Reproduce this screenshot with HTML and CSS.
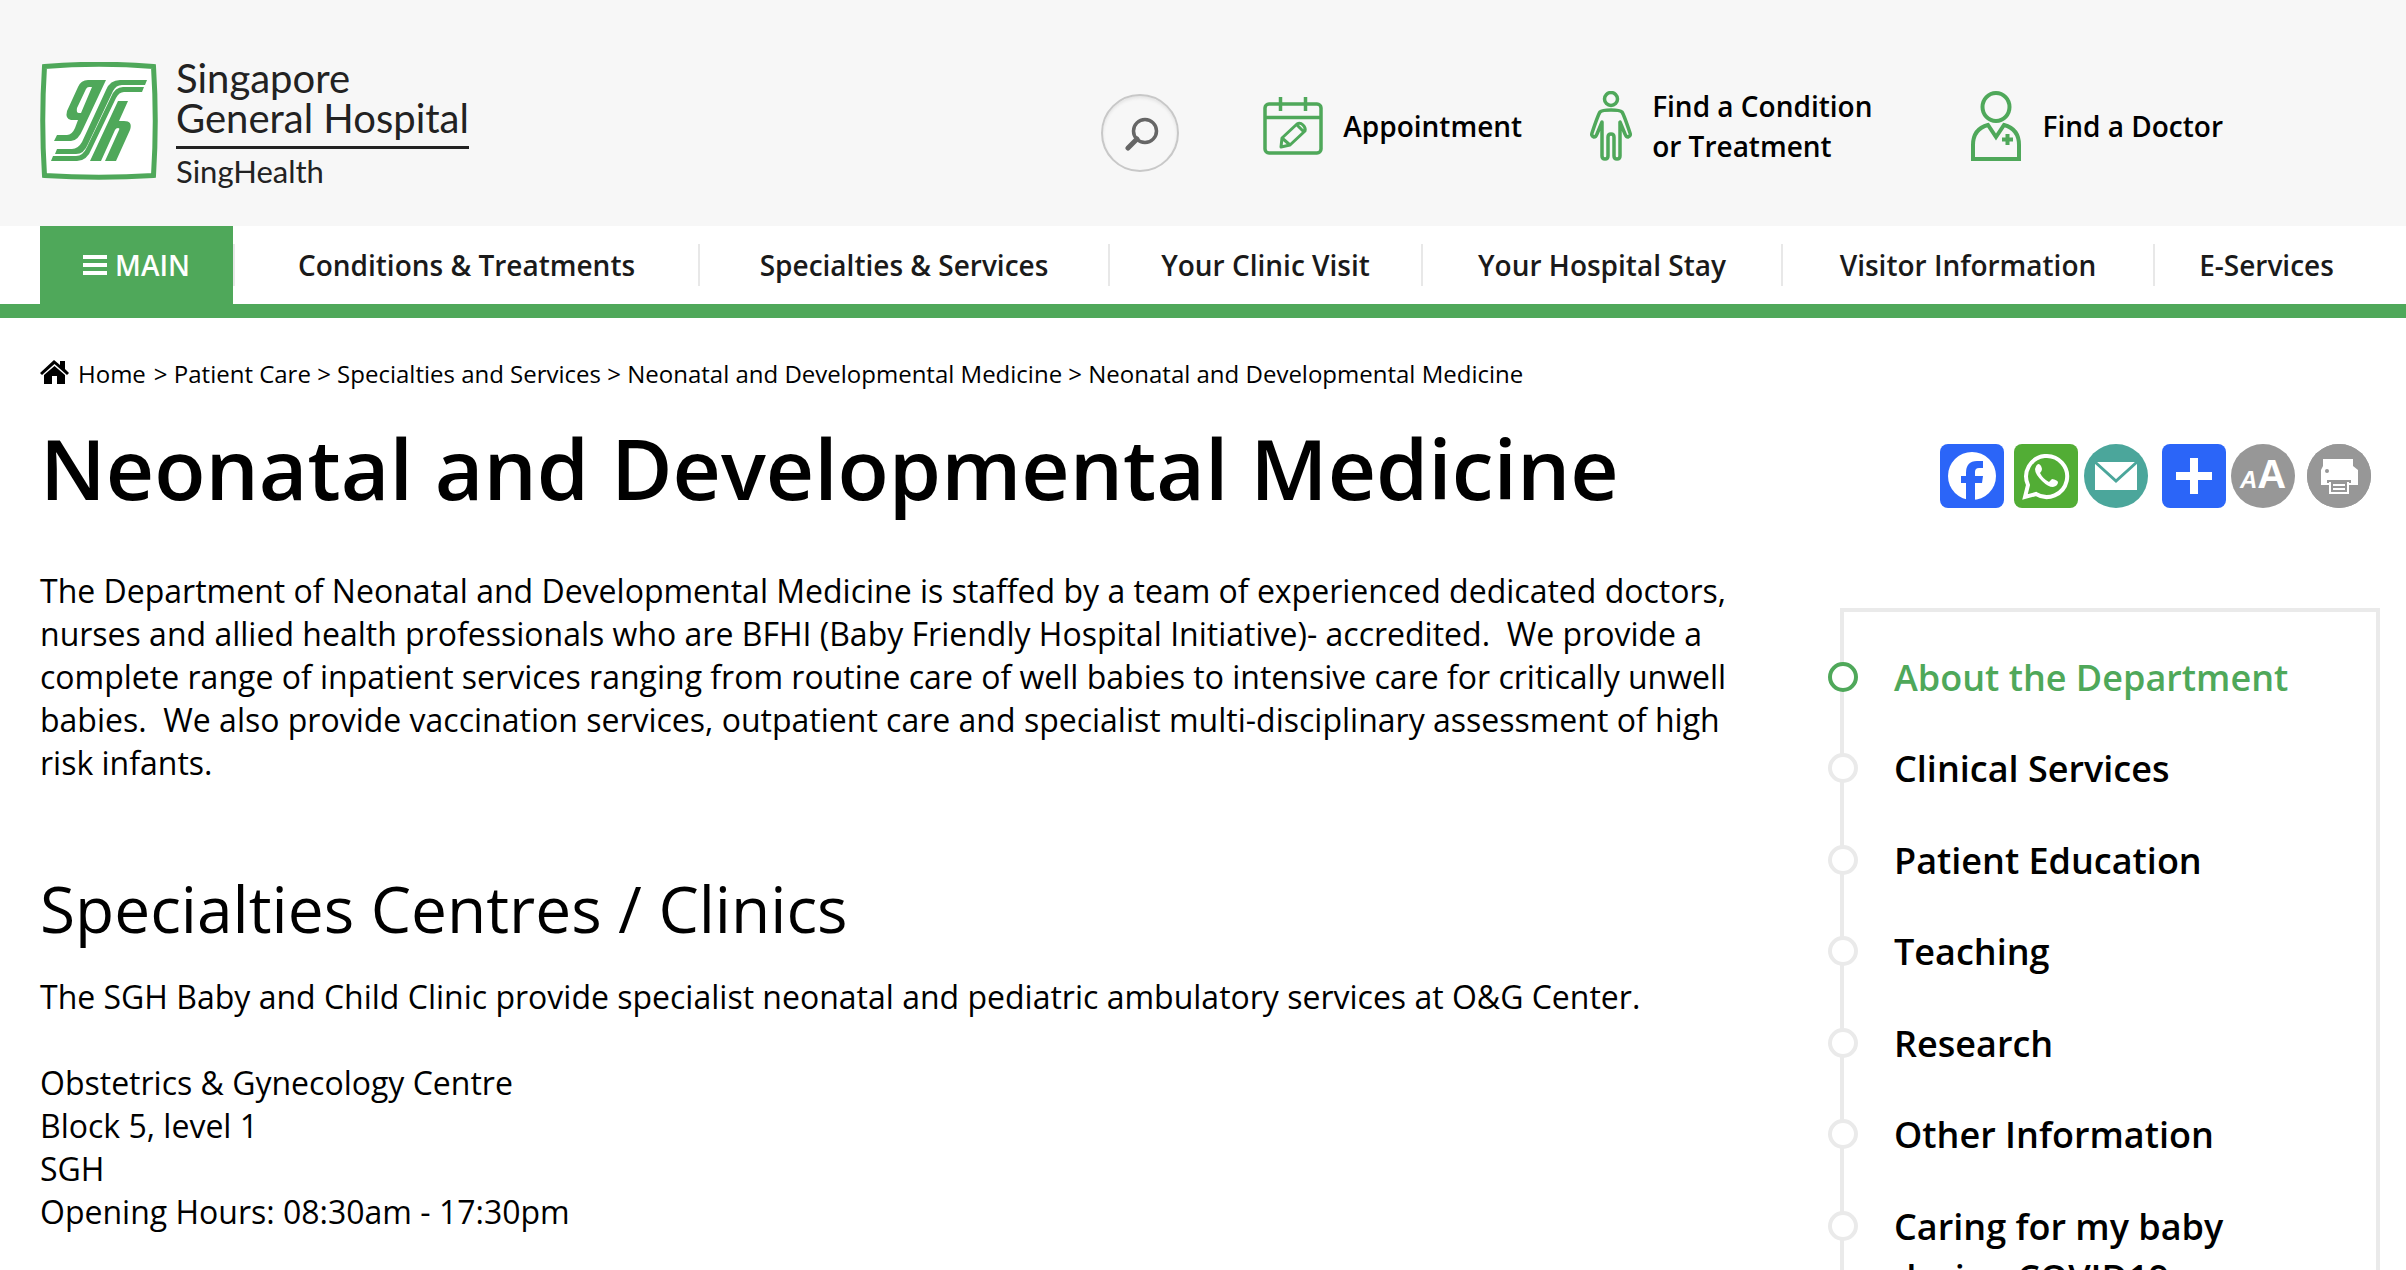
FILE: index.html
```html
<!DOCTYPE html>
<html lang="en">
<head>
<meta charset="utf-8">
<meta name="viewport" content="width=device-width, initial-scale=1">
<title>Neonatal and Developmental Medicine - Singapore General Hospital</title>
<link rel="stylesheet" href="styles.css">
</head>
<body>
<header class="site-header">
  <a class="logo" href="#">
    <svg class="logo-mark" viewBox="0 0 118 118" aria-hidden="true">
      <path d="M4 4Q59-1 114 4Q119 59 114 114Q59 119 4 114Q-1 59 4 4Z" fill="#fff" stroke="none"/>
      <path d="M4.500 4.500Q59 0 113.500 4.500Q117 59 113.500 113.500Q59 117 4.500 113.500Q1 59 4.500 4.500Z" fill="none" stroke="#4fa85a" stroke-width="5"/>
      <g fill="#4fa85a">
        <path fill-rule="evenodd" d="M66 18L43 67Q38 79 31 79H14L17 73H27Q32 73 35 66L38 58H31Q25 57 27 49L38 25Q41 18 48 18ZM52 25H49Q47 25 46 27L37 46Q36 51 39 51H41Z"/>
        <path d="M107 18L105 23H82Q76 23 73 29L48 82Q44 92 36 92H15L17 87H32Q38 87 42 80L66 28Q70 18 80 18Z"/>
        <path d="M104 25L102 30H84Q79 30 76 36L52 86Q47 99 37 99H11L13 94H36Q43 94 47 85L71 35Q75 25 83 25Z"/>
        <path d="M78 39H88L79 59H84Q93 59 90 68L76 99H65L79 68Q80 66 78 66Q76 66 75 68L61 99H50Z"/>
      </g>
    </svg>
    <span class="logo-text">
      <span class="logo-name">Singapore<br>General Hospital</span>
      <span class="logo-group">SingHealth</span>
    </span>
  </a>
  <div class="header-tools">
    <button class="search" type="button" aria-label="Search">
      <svg viewBox="0 0 34 34" fill="none" stroke="#666"><circle cx="20" cy="14" r="11.500" stroke-width="3.500"/><path d="M12 22L3 31" stroke-width="5" stroke-linecap="round"/></svg>
    </button>
    <a class="tool tool-appointment" href="#">
      <svg width="60" height="58" viewBox="0 0 60 58" fill="none" stroke="#4fa85a" stroke-width="3.500">
        <rect x="2" y="7" width="56" height="49" rx="4"/><path d="M1 20.500H59M17.500 0V14M42.500 0V14"/>
        <path d="M18 50L19 41L34 27Q37 25 40 28T42 34L27 48ZM19 41L27 48M34 28L41 35" stroke-width="3" stroke-linejoin="round"/>
      </svg>
      <span>Appointment</span>
    </a>
    <a class="tool tool-condition" href="#">
      <svg width="42" height="70" viewBox="0 0 42 70" fill="none" stroke="#4fa85a" stroke-width="3.500" stroke-linejoin="round" stroke-linecap="round">
        <ellipse cx="21" cy="8" rx="6.500" ry="6.500"/>
        <path d="M21 19Q30 19 32 21Q34 24 40 42Q41 45 38 46Q36 46 35 43L30 31V65Q30 68 27 68Q24 68 24 65V46Q24 43 21 43Q18 43 18 46V65Q18 68 15 68Q12 68 12 65V31L7 43Q6 46 4 46Q1 45 2 42Q8 24 10 21Q12 19 21 19Z"/>
      </svg>
      <span>Find a Condition<br>or Treatment</span>
    </a>
    <a class="tool tool-doctor" href="#">
      <svg width="50" height="70" viewBox="0 0 50 70" fill="none" stroke="#4fa85a" stroke-width="4">
        <ellipse cx="25" cy="16" rx="13.500" ry="14"/>
        <path d="M17 34Q2 38 2 54V68H48V54Q48 38 33 34L25 46Z"/><path d="M36.500 43V54M31 48.500H42"/>
      </svg>
      <span>Find a Doctor</span>
    </a>
  </div>
</header>

<nav class="main-nav" aria-label="Main">
  <button class="main-menu" type="button">
    <svg width="24" height="20" viewBox="0 0 24 20" fill="#fff" aria-hidden="true"><path d="M0 0H24V4H0ZM0 8H24V12H0ZM0 16H24V20H0Z"/></svg>MAIN
  </button>
  <a href="#">Conditions &amp; Treatments</a>
  <a href="#">Specialties &amp; Services</a>
  <a href="#">Your Clinic Visit</a>
  <a href="#">Your Hospital Stay</a>
  <a href="#">Visitor Information</a>
  <a href="#">E-Services</a>
</nav>

<nav class="breadcrumb" aria-label="Breadcrumb">
  <svg width="29" height="24" viewBox="0 0 29 24" aria-hidden="true"><path d="M14 0L20 5V1H25V9L29 13L27 15L14.500 4L2 15L0 13Z"/><path d="M14.500 6L25 15V24H17V16H12V24H4V15Z"/></svg>
  <a class="home" href="#">Home</a>
  <span>&gt; <a href="#">Patient Care</a> &gt; <a href="#">Specialties and Services</a> &gt; <a href="#">Neonatal and Developmental Medicine</a> &gt; Neonatal and Developmental Medicine</span>
</nav>

<main class="page">
  <article class="content">
    <h1>Neonatal and Developmental Medicine</h1>
    <p>The Department of Neonatal and Developmental Medicine is staffed by a team of experienced dedicated doctors, nurses and allied health professionals who are BFHI (Baby Friendly Hospital Initiative)- accredited.&nbsp; We provide a complete range of inpatient services ranging from routine care of well babies to intensive care for critically unwell babies.&nbsp; We also provide vaccination services, outpatient care and specialist multi-disciplinary assessment of high risk infants.</p>
    <h2>Specialties Centres / Clinics</h2>
    <p>The SGH Baby and Child Clinic provide specialist neonatal and pediatric ambulatory services at O&amp;G Center.</p>
    <p class="address">Obstetrics &amp; Gynecology Centre<br>Block 5, level 1<br>SGH<br>Opening Hours: 08:30am - 17:30pm</p>
  </article>
  <aside class="side">
    <div class="share">
      <a href="#" aria-label="Facebook"><svg viewBox="0 0 64 64"><rect width="64" height="64" rx="8" fill="#2b65f8"/><circle cx="32" cy="32" r="24" fill="#fff"/><path d="M26 58V39H21V32H26V29Q26 17 37 17H43V24H39Q35 24 35 28V32H43L42 39H35V58Z" fill="#2b65f8"/></svg></a>
      <a href="#" aria-label="WhatsApp"><svg viewBox="0 0 64 64"><rect width="64" height="64" rx="8" fill="#52ad35"/><path d="M11 53L14 41A20.500 20.500 0 1 1 22 50Z" fill="none" stroke="#fff" stroke-width="4"/><path d="M24 20Q27 20 28 25Q28 27 26 29Q29 35 35 38L38 35Q43 36 44 38Q44 42 39 43Q34 43 28 37Q21 30 21 25Q22 21 24 20Z" fill="#fff"/></svg></a>
      <a class="share-mail" href="#" aria-label="Email"><svg viewBox="0 0 64 64"><circle cx="32" cy="32" r="32" fill="#4ba69b"/><path d="M11 18H53V46H11Z" fill="#fff"/><path d="M11 18L32 37L53 18" fill="none" stroke="#4ba69b" stroke-width="3"/></svg></a>
      <a href="#" aria-label="More sharing options"><svg viewBox="0 0 64 64"><rect width="64" height="64" rx="8" fill="#2b65f8"/><path d="M28 14H36V28H50V36H36V50H28V36H14V28H28Z" fill="#fff"/></svg></a>
      <button class="text-size" type="button" aria-label="Text size"><small>A</small>A</button>
      <button class="print" type="button" aria-label="Print"><svg viewBox="0 0 64 64"><circle cx="32" cy="32" r="32" fill="#979797"/><path d="M16 15H46V22L51 26V41H46V35H18V41H14V26L16 22Z" fill="#fff"/><circle cx="20" cy="27" r="2" fill="#979797"/><path d="M16 34H48V41H16Z" fill="#fff"/><path d="M20 36H44V39H41V49H23V39H20Z" fill="#979797"/><path d="M23 38V49H41V38" fill="none" stroke="#fff" stroke-width="2"/><path d="M26 41H38M26 45H38" stroke="#fff" stroke-width="2"/></svg></button>
    </div>
    <nav class="side-nav" aria-label="Department">
      <a class="current" href="#" aria-current="page">About the Department</a>
      <a href="#">Clinical Services</a>
      <a href="#">Patient Education</a>
      <a href="#">Teaching</a>
      <a href="#">Research</a>
      <a href="#">Other Information</a>
      <a href="#">Caring for my baby during COVID19</a>
    </nav>
  </aside>
</main>
</body>
</html>
```
FILE: styles.css
```css
*, *::before { box-sizing: border-box; }

html { overflow: hidden; }

body {
  margin: 0;
  height: 100vh;
  overflow: hidden;
  background: #fff;
  color: #000;
  font-family: "Open Sans", sans-serif;
  font-size: 32px;
  line-height: 43px;
}

a { color: inherit; text-decoration: none; }
svg { display: block; flex: none; }
button { border: 0; padding: 0; font: inherit; cursor: pointer; }

/* Header */
.site-header {
  display: flex;
  justify-content: space-between;
  align-items: flex-start;
  height: 226px;
  padding: 58px 183px 0 40px;
  background: #f7f7f7;
}
.logo { display: flex; gap: 18px; color: #222; font-family: Lato, sans-serif; }
.logo-mark { width: 118px; height: 118px; margin-top: 4px; }
.logo-text { display: flex; flex-direction: column; }
.logo-name { padding-bottom: 8px; border-bottom: 3px solid #222; font-size: 40px; line-height: 40px; }
.logo-group { padding-top: 2px; font-size: 31px; line-height: 40px; }

.header-tools { display: flex; align-items: flex-start; padding-top: 28px; font-size: 28px; font-weight: 600; line-height: 40px; }
.search {
  display: grid;
  place-items: center;
  width: 78px;
  height: 78px;
  margin: 8px 84px 0 0;
  border: 2px solid #c8c8c8;
  border-radius: 50%;
  background: #f7f7f7;
  box-shadow: inset 0 2px 3px #e4e4e4;
}
.search svg { width: 34px; height: 34px; margin: 2px 0 0 4px; }
.tool { display: flex; align-items: center; gap: 20px; height: 80px; }
.tool-condition { margin-left: 68px; }
.tool-doctor { margin-left: 98px; gap: 22px; }

/* Main navigation */
.main-nav {
  display: grid;
  grid-template-columns: 193px 465fr 410fr 313fr 360fr 372fr 225fr;
  align-items: center;
  height: 92px;
  padding: 0 28px 0 40px;
  border-bottom: 14px solid #4fa85a;
  color: #1a1a1a;
  font-size: 28px;
  font-weight: 600;
  line-height: 42px;
  text-align: center;
}
.main-nav a { border-left: 2px solid #e8e8e8; white-space: nowrap; }
.main-menu {
  display: flex;
  justify-content: center;
  align-items: center;
  gap: 8px;
  height: 100%;
  background: #4fa85a;
  color: #fff;
}

/* Breadcrumb */
.breadcrumb { display: flex; align-items: center; padding: 39px 40px 0; font-size: 24px; line-height: 34px; }
.breadcrumb svg { margin-bottom: 4px; }
.breadcrumb .home { margin: 0 8px 0 9px; }

/* Page */
.page { display: grid; grid-template-columns: minmax(0, 1fr) 552px; column-gap: 70px; padding: 0 26px 0 40px; }
h1 { margin: 19px 0 43px; font-size: 84px; font-weight: 600; line-height: 116px; }
h2 { margin: 81px 0 22px; font-size: 64px; font-weight: 400; line-height: 88px; }
p { margin: 0 0 43px; }

.share { display: flex; gap: 10px; padding: 53px 0 100px 112px; }
.share svg { width: 64px; height: 64px; }
.share button { width: 64px; height: 64px; border-radius: 50%; background: #979797; color: #fff; }
.share .share-mail { margin: 0 4px 0 -4px; }
.share .text-size { margin: 0 2px 0 -5px; font-family: "Liberation Sans", sans-serif; font-size: 40px; font-weight: 700; line-height: 60px; }
.text-size small { font-size: 24px; font-style: italic; }

.side-nav {
  display: flex;
  flex-direction: column;
  gap: 40px;
  min-height: 800px;
  margin-left: 12px;
  padding: 40px 60px 40px 50px;
  border: 4px solid #eaeaea;
  font-size: 36px;
  font-weight: 600;
  line-height: 1.43;
}
.side-nav a { position: relative; }
.side-nav a::before {
  content: "";
  position: absolute;
  top: 10px;
  left: -66px;
  width: 30px;
  height: 30px;
  border: 4px solid #eaeaea;
  border-radius: 50%;
  background: #fff;
}
.side-nav .current { color: #4fa85a; }
.side-nav .current::before { border-color: #4fa85a; }
```
